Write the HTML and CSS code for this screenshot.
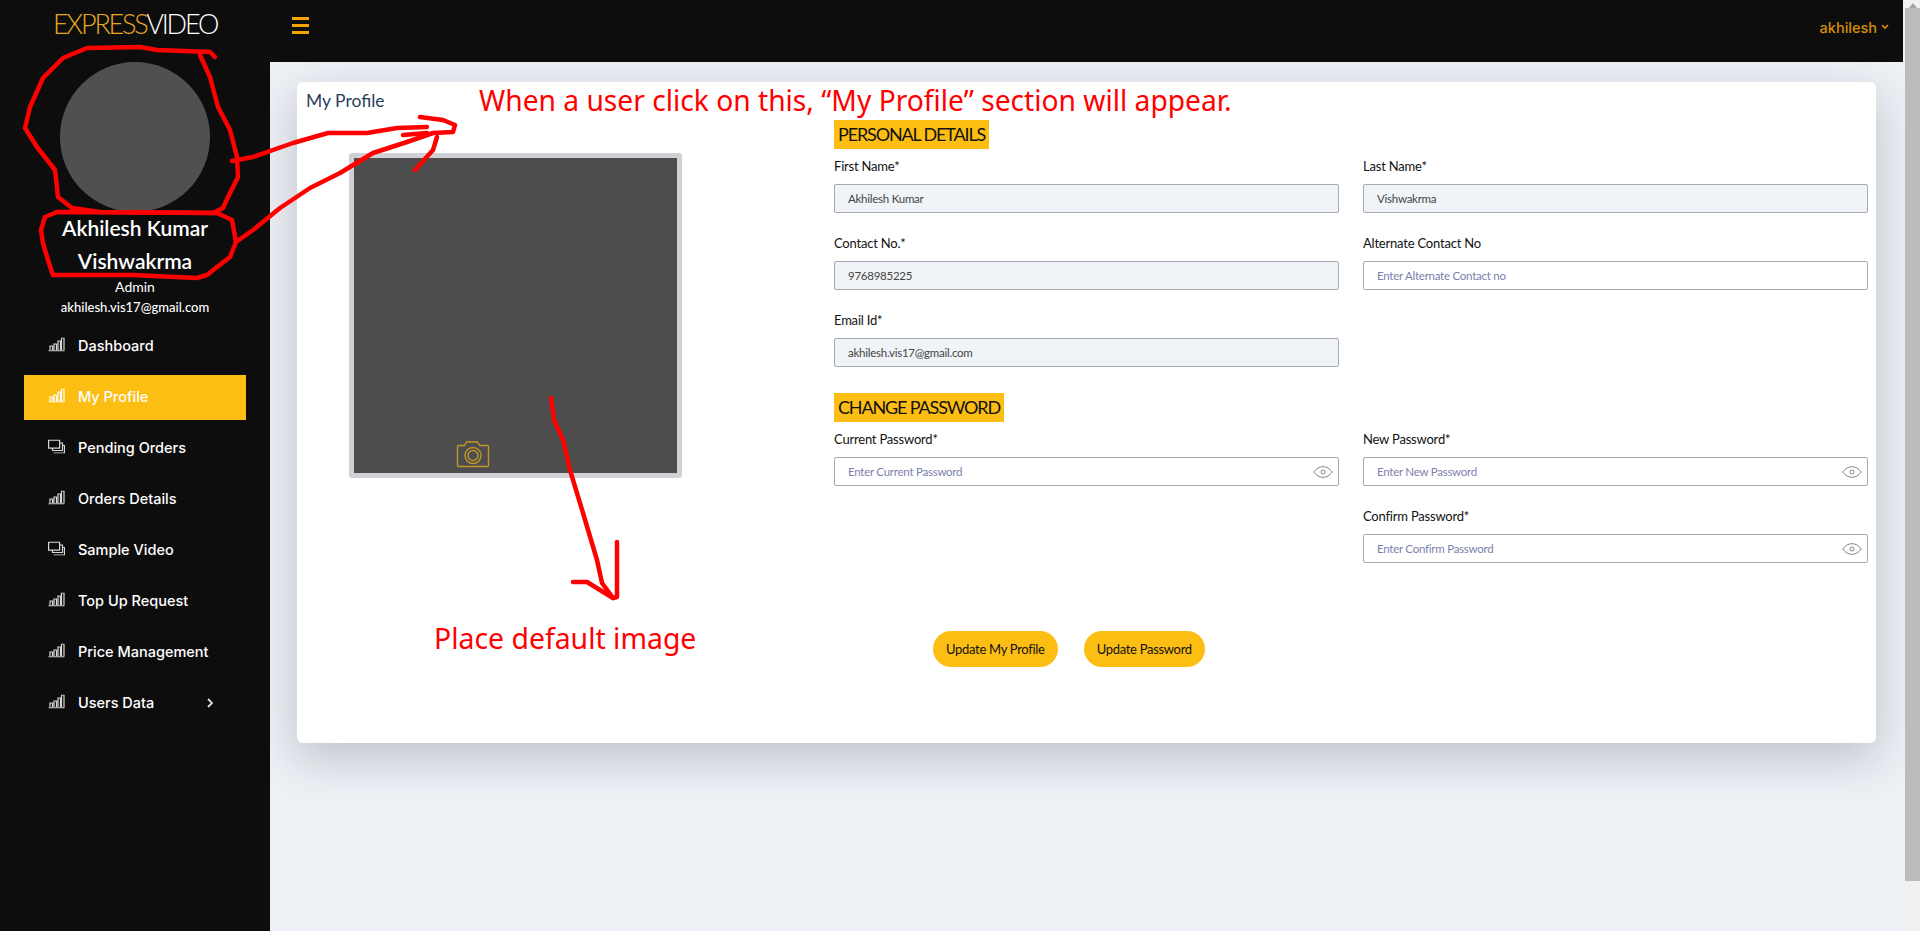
FILE: index.html
```html
<!DOCTYPE html>
<html lang="en">
<head>
    <meta charset="UTF-8">
    <title>My Profile</title>
    <link rel="stylesheet" href="styles.css">
</head>
<body>
    <div class="sidebar">
        <div class="logo"><span class="logo-gold">EXPRESS</span>VIDEO</div>
        <div class="avatar"></div>
        <div class="user-name">Akhilesh Kumar Vishwakrma</div>
        <div class="user-role">Admin</div>
        <div class="user-mail">akhilesh.vis17@gmail.com</div>
        <nav class="nav">
            <a class="nav-item"><svg class="nav-icon" viewBox="0 0 17 14"><use href="#bars"/></svg>Dashboard</a>
            <a class="nav-item active"><svg class="nav-icon" viewBox="0 0 17 14"><use href="#bars"/></svg>My Profile</a>
            <a class="nav-item"><svg class="nav-icon" viewBox="0 0 17 14"><use href="#stack"/></svg>Pending Orders</a>
            <a class="nav-item"><svg class="nav-icon" viewBox="0 0 17 14"><use href="#bars"/></svg>Orders Details</a>
            <a class="nav-item"><svg class="nav-icon" viewBox="0 0 17 14"><use href="#stack"/></svg>Sample Video</a>
            <a class="nav-item"><svg class="nav-icon" viewBox="0 0 17 14"><use href="#bars"/></svg>Top Up Request</a>
            <a class="nav-item"><svg class="nav-icon" viewBox="0 0 17 14"><use href="#bars"/></svg>Price Management</a>
            <a class="nav-item"><svg class="nav-icon" viewBox="0 0 17 14"><use href="#bars"/></svg>Users Data
                <svg class="nav-arrow" viewBox="0 0 6 10"><path d="M1 1l4 4-4 4"/></svg></a>
        </nav>
    </div>

    <div class="main">
        <header class="topbar">
            <div class="burger"><span></span><span></span><span></span></div>
            <div class="account">akhilesh
                <svg class="account-arrow" viewBox="0 0 8 6"><path d="M1 1l3 3 3-3"/></svg></div>
        </header>

        <div class="content">
            <div class="card">
                <div class="photo-col">
                    <h1 class="card-title">My Profile</h1>
                    <div class="photo">
                        <svg class="camera" viewBox="0 0 34 28">
                            <path d="M2.500 5.500h6l2-3.500h11l2 3.500h8a1 1 0 0 1 1 1v19a1 1 0 0 1-1 1h-29a1 1 0 0 1-1-1v-19a1 1 0 0 1 1-1z"/>
                            <circle cx="17" cy="15.500" r="8"/>
                            <circle cx="17" cy="15.500" r="5"/>
                        </svg>
                    </div>
                </div>

                <form class="form-col">
                    <h2 class="section-title">PERSONAL DETAILS</h2>
                    <div class="fields">
                        <div class="field">
                            <label>First Name*</label>
                            <input class="locked" type="text" value="Akhilesh Kumar">
                        </div>
                        <div class="field">
                            <label>Last Name*</label>
                            <input class="locked" type="text" value="Vishwakrma">
                        </div>
                        <div class="field">
                            <label>Contact No.*</label>
                            <input class="locked" type="text" value="9768985225">
                        </div>
                        <div class="field">
                            <label>Alternate Contact No</label>
                            <input type="text" placeholder="Enter Alternate Contact no">
                        </div>
                        <div class="field">
                            <label>Email Id*</label>
                            <input class="locked" type="text" value="akhilesh.vis17@gmail.com">
                        </div>
                    </div>

                    <h2 class="section-title second">CHANGE PASSWORD</h2>
                    <div class="fields">
                        <div class="field">
                            <label>Current Password*</label>
                            <div class="pass-box">
                                <input type="text" placeholder="Enter Current Password">
                                <svg class="eye" viewBox="0 0 20 12"><use href="#eye"/></svg>
                            </div>
                        </div>
                        <div class="field">
                            <label>New Password*</label>
                            <div class="pass-box">
                                <input type="text" placeholder="Enter New Password">
                                <svg class="eye" viewBox="0 0 20 12"><use href="#eye"/></svg>
                            </div>
                        </div>
                        <div class="field confirm">
                            <label>Confirm Password*</label>
                            <div class="pass-box">
                                <input type="text" placeholder="Enter Confirm Password">
                                <svg class="eye" viewBox="0 0 20 12"><use href="#eye"/></svg>
                            </div>
                        </div>
                    </div>

                    <div class="buttons">
                        <button type="button" class="btn">Update My Profile</button>
                        <button type="button" class="btn">Update Password</button>
                    </div>
                </form>
            </div>
        </div>
    </div>

    <div class="scrollbar">
        <div class="scroll-up"></div>
        <div class="scroll-thumb"></div>
    </div>

    <!-- red notes drawn on top of the page -->
    <div class="note note-top">When a user click on this, “My Profile” section will appear.</div>
    <div class="note note-bottom">Place default image</div>
    <svg class="scribble" viewBox="0 0 1920 931">
        <path d="M215 57L210 52 157 50 140 47 87 48 63 58 43 78 30 107 25 128 37 147 55 170 58 197 72 208 100 212 217 213"/>
        <path d="M200 55L210 77 218 107 230 130 237 157 238 177 228 197 223 208 213 213"/>
        <path d="M57 212L217 213 232 220 236 242 230 257 217 267 207 275 197 278 133 275 53 275 48 260 43 243 41 230 45 217Z"/>
        <path d="M232 161L253 157 293 143 328 133 367 133 397 128 427 127"/>
        <path d="M236 242L253 230 280 208 310 188 340 173 373 153 407 142 433 133 453 132 455 125 443 120 420 117"/>
        <path d="M403 135L427 133"/>
        <path d="M437 137L433 150 415 170"/>
        <path d="M551 398L554 420 563 440 570 470 583 513 597 560 602 583 613 598 617 597 617 542"/>
        <path d="M573 582L587 582 613 598"/>
    </svg>

    <svg class="icon-defs">
        <symbol id="bars" viewBox="0 0 17 14">
            <path d="M.5 13.300h16M2 12.500v-4h2.500v4M6 12.500v-6h2.500v6M10 12.500v-9h2.500v9M13.500 12.500v-12h2.500v12" fill="none" stroke="currentColor" stroke-width="1.200"/>
        </symbol>
        <symbol id="stack" viewBox="0 0 17 14">
            <path d="M.6.600h11v8h-11zM12 3.500h2.500v7.500h-10v-2M14.500 6h2v7.500h-11" fill="none" stroke="currentColor" stroke-width="1.200"/>
        </symbol>
        <symbol id="eye" viewBox="0 0 20 12">
            <path d="M.7 6C3.500 2.300 6.500.7 10 .7s6.500 1.600 9.300 5.300c-2.800 3.700-5.800 5.300-9.300 5.300S3.500 9.700.7 6z" fill="none" stroke="currentColor" stroke-width=".9"/>
            <circle cx="10" cy="6" r="2" fill="none" stroke="currentColor" stroke-width=".9"/>
        </symbol>
    </svg>
</body>
</html>
```

FILE: styles.css
```css
* {
    box-sizing: border-box;
}
body {
    margin: 0;
    height: 931px;
    overflow: hidden;
    display: flex;
    background-color: #edf0f5;
    font-family: "Lato", "Noto Sans", sans-serif;
}

/* sidebar */
.sidebar {
    width: 270px;
    flex-shrink: 0;
    background-color: #0e0d0e;
    color: #fff;
    text-align: center;
    position: relative;
    z-index: 2;
}
.logo {
    height: 62px;
    padding-top: 8px;
    font-size: 27px;
    line-height: 32px;
    font-weight: 300;
    letter-spacing: -2.2px;
    color: #fff;
}
.logo-gold {
    color: #e8a820;
}
.avatar {
    width: 150px;
    height: 150px;
    margin: 0 auto;
    border-radius: 50%;
    background-color: #505050;
}
.user-name {
    width: 180px;
    margin: -1px auto 0;
    font-size: 21px;
    line-height: 33px;
    font-weight: 600;
}
.user-role,
.user-mail {
    line-height: 20px;
}
.user-role {
    font-size: 14px;
}
.user-mail {
    font-size: 13px;
    font-weight: 500;
}
.nav {
    margin: 7px 24px 0;
    display: flex;
    flex-direction: column;
    gap: 6px;
}
.nav-item {
    height: 45px;
    padding-left: 24px;
    padding-bottom: 2px;
    display: flex;
    align-items: center;
    font-family: "Inter", sans-serif;
    font-size: 14.5px;
    font-weight: 500;
    color: #fff;
}
.nav-item.active {
    background-color: #fdbe13;
}
.nav-icon {
    width: 17px;
    height: 15px;
    margin-right: 13px;
    margin-top: -2px;
    color: #d8d8d8;
}
.active .nav-icon {
    color: #fff;
}
.nav-arrow {
    width: 6px;
    height: 10px;
    margin-left: auto;
    margin-right: 33px;
    fill: none;
    stroke: #ddd;
    stroke-width: 1.8;
}

/* top bar */
.main {
    flex: 1;
    min-width: 0;
}
.topbar {
    height: 62px;
    margin-right: 2px;
    padding: 17px 22px 0;
    display: flex;
    justify-content: space-between;
    background-color: #0e0d0e;
    position: relative;
    z-index: 1;
}
.burger {
    width: 17px;
    display: flex;
    flex-direction: column;
    gap: 4px;
}
.burger span {
    height: 3px;
    background-color: #f5a500;
}
.account {
    display: flex;
    align-items: center;
    gap: 4px;
    height: 20px;
    margin-right: -8px;
    font-family: "Inter", sans-serif;
    font-size: 14.5px;
    font-weight: 500;
    color: #d98e04;
}
.account-arrow {
    width: 8px;
    height: 6px;
    fill: none;
    stroke: #d98e04;
    stroke-width: 1.6;
}

/* profile card */
.content {
    padding: 20px 29px 0 27px;
}
.card {
    height: 661px;
    display: flex;
    background-color: #fff;
    border-radius: 6px;
    box-shadow: 0 15px 45px rgba(20, 30, 50, 0.22);
}
.photo-col {
    width: 537px;
    flex-shrink: 0;
    padding: 8px 0 0 9px;
}
.card-title {
    margin: 0;
    font-size: 17.5px;
    line-height: 22px;
    font-weight: 400;
    color: #2a3f5c;
}
.photo {
    width: 333px;
    height: 325px;
    margin: 41px 0 0 43px;
    border: 5px solid #d0d0d5;
    border-radius: 3px;
    background-color: #4d4d4d;
    position: relative;
}
.camera {
    position: absolute;
    left: 102px;
    bottom: 5px;
    width: 34px;
    height: 28px;
    fill: none;
    stroke: #c1952a;
    stroke-width: 1.4;
}

/* form */
.form-col {
    flex: 1;
    padding: 38px 8px 0 0;
}
.section-title {
    display: inline-block;
    height: 29px;
    margin: 0 0 7px;
    padding: 0 4px;
    background-color: #fdbe13;
    font-size: 18px;
    line-height: 28px;
    font-weight: 400;
    letter-spacing: -1.15px;
    color: #111;
    vertical-align: top;
}
.section-title.second {
    margin-top: 26px;
}
.fields {
    display: grid;
    grid-template-columns: 505px 505px;
    column-gap: 24px;
    row-gap: 20px;
}
.field label {
    display: block;
    height: 20px;
    margin-bottom: 8px;
    font-size: 13px;
    line-height: 20px;
    letter-spacing: -0.2px;
    color: #111;
}
.field.confirm {
    grid-column: 2;
}
.field input {
    display: block;
    width: 100%;
    height: 29px;
    padding: 0 13px 1px;
    border: 1px solid #a7a9b0;
    border-radius: 2px;
    outline: none;
    background-color: #fff;
    font-family: "Lato", "Noto Sans", sans-serif;
    font-size: 11.5px;
    letter-spacing: -0.25px;
    color: #444;
}
.field input::placeholder {
    color: #7b7fae;
    opacity: 1;
}
.field input.locked {
    background-color: #f0f3f8;
}
.pass-box {
    position: relative;
}
.eye {
    position: absolute;
    right: 6px;
    top: 9px;
    width: 20px;
    height: 12px;
    color: #777;
}
.buttons {
    display: flex;
    gap: 26px;
    margin-top: 68px;
    padding-left: 99px;
}
.btn {
    height: 36px;
    padding: 0 13px;
    border: none;
    border-radius: 18px;
    background-color: #fdbe13;
    font-family: "Lato", "Noto Sans", sans-serif;
    font-size: 13px;
    letter-spacing: -0.3px;
    color: #111;
}

/* scrollbar of the window */
.scrollbar {
    width: 15px;
    flex-shrink: 0;
    background-color: #f1f1f1;
}
.scroll-up {
    width: 0;
    height: 8px;
    margin: 0 auto;
    border-left: 4px solid transparent;
    border-right: 4px solid transparent;
    border-bottom: 5px solid #a3a3a3;
}
.scroll-thumb {
    height: 873px;
    background-color: #bcbcbc;
}

/* red notes */
.note {
    position: absolute;
    z-index: 4;
    color: #f00;
    font-family: "Noto Sans", sans-serif;
    white-space: nowrap;
    line-height: 38px;
}
.note-top {
    left: 479px;
    top: 81px;
    font-size: 28.2px;
}
.note-bottom {
    left: 434px;
    top: 619px;
    font-size: 28.4px;
}
.scribble {
    position: absolute;
    left: 0;
    top: 0;
    width: 1920px;
    height: 931px;
    z-index: 3;
    fill: none;
    stroke: #f00;
    stroke-width: 4.500;
    stroke-linecap: round;
    stroke-linejoin: round;
}
.icon-defs {
    position: absolute;
    width: 0;
    height: 0;
}
```
